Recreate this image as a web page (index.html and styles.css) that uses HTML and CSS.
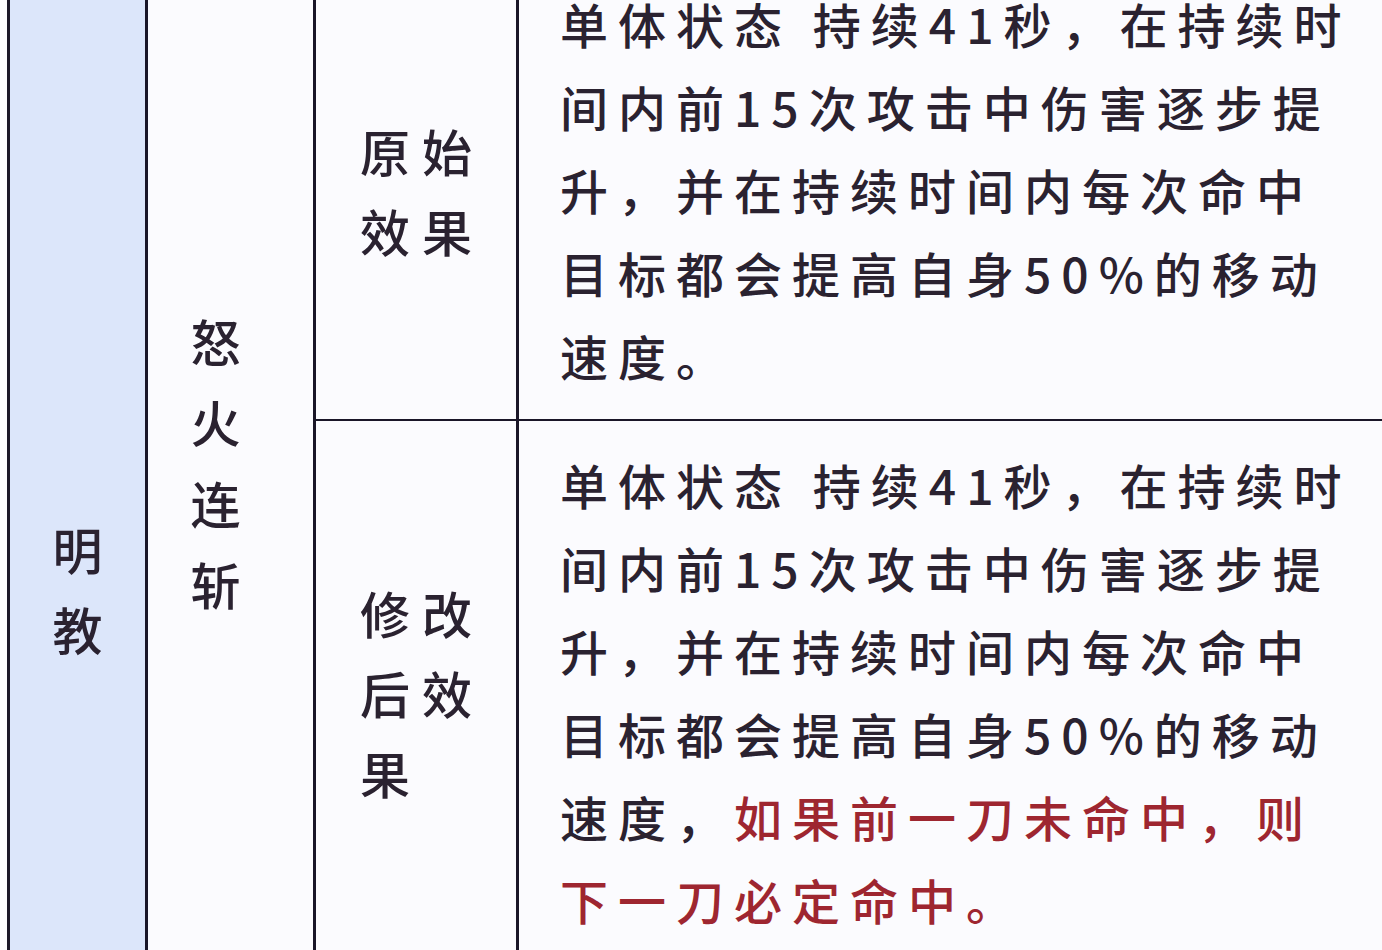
FILE: index.html
```html
<!DOCTYPE html>
<html lang="zh-CN">
<head>
<meta charset="utf-8">
<link rel="stylesheet" href="styles.css">
</head>
<body>
<div class="table">
  <div class="sect"><span>明<br>教</span></div>
  <div class="grid">
    <div class="cell skill"><span>怒<br>火<br>连<br>斩</span></div>
    <div class="cell label row1"><span>原始<br>效果</span></div>
    <div class="cell desc row1">单体状态 持续41秒，在持续时<br>间内前15次攻击中伤害逐步提<br>升，并在持续时间内每次命中<br>目标都会提高自身50%的移动<br>速度。</div>
    <div class="cell label"><span>修改<br>后效<br>果</span></div>
    <div class="cell desc">单体状态 持续41秒，在持续时<br>间内前15次攻击中伤害逐步提<br>升，并在持续时间内每次命中<br>目标都会提高自身50%的移动<br>速度，<span class="red">如果前一刀未命中，则<br>下一刀必定命中。</span></div>
  </div>
</div>
</body>
</html>
```
FILE: styles.css
```css
html, body {
  margin: 0;
  padding: 0;
  height: 100%;
  overflow: hidden;
  background: #fbfbfe;
}
body {
  font-family: "Noto Sans CJK SC", "Noto Sans", sans-serif;
  font-weight: 500;
  color: #2a2230;
}
.table {
  display: flex;
  align-items: flex-start;
  margin-top: -40px;
  padding-left: 7px;
}
.sect {
  flex: none;
  width: 135px;
  height: 1256px;
  background: #dce6fa;
  border-left: 3px solid #1a1628;
  border-right: 3px solid #1a1628;
  display: flex;
  align-items: center;
  justify-content: center;
  font-size: 50px;
  line-height: 80px;
}
.grid {
  flex: 1;
  display: grid;
  grid-template-columns: 168px 203px 1fr;
}
.cell {
  display: flex;
  align-items: center;
}
.skill {
  grid-row: span 2;
  justify-content: center;
  padding-right: 30px;
  border-right: 3px solid #1a1628;
  font-size: 50px;
  line-height: 81px;
}
.label {
  justify-content: center;
  border-right: 3px solid #1a1628;
  font-size: 50px;
  line-height: 80px;
  letter-spacing: 12px;
}
.label span {
  text-align: left;
  padding-left: 12px;
}
.row1 {
  border-bottom: 2px solid #1a1628;
}
.desc {
  display: block;
  padding: 22px 0 22px 41px;
  font-size: 48px;
  line-height: 83px;
  letter-spacing: 10px;
  white-space: nowrap;
}
.red {
  color: #9e2630;
}
```
